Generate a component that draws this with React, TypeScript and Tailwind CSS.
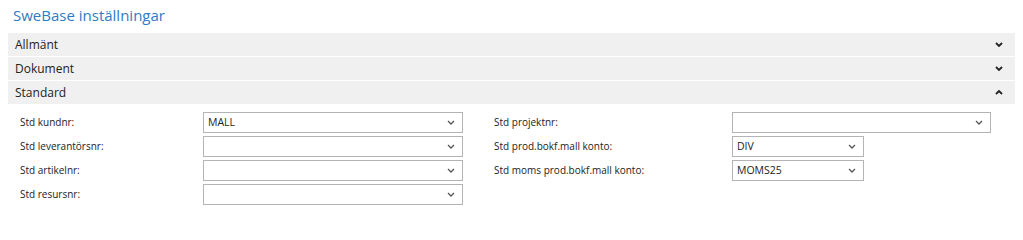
import React from "react"

const font = { fontFamily: '"Segoe UI", "Open Sans", "Noto Sans", sans-serif' }

function Chevron({ up = false, bold = false }: { up?: boolean; bold?: boolean }) {
  return (
    <svg width="8" height="5" viewBox="0 0 8 5" className={bold ? "text-[#222]" : "text-[#555]"}>
      <path
        d={up ? "M1 4 L4 1 L7 4" : "M1 1 L4 4 L7 1"}
        fill="none"
        stroke="currentColor"
        strokeWidth={bold ? 1.8 : 1.3}
      />
    </svg>
  )
}

function SectionBar({ title, open = false }: { title: string; open?: boolean }) {
  return (
    <div className="mx-2 flex h-[23px] items-center justify-between bg-[#f0f0f0] pl-[7px] pr-[12px] text-[12px] text-[#222]">
      <span>{title}</span>
      <Chevron up={open} bold />
    </div>
  )
}

function Select({ value = "", width }: { value?: string; width: string }) {
  return (
    <div className={`flex h-[21px] items-center justify-between border border-[#b4b4b4] bg-white pl-[4px] pr-[7px] text-[10.5px] text-[#222] ${width}`}>
      <span>{value}</span>
      <Chevron />
    </div>
  )
}

function Field({ label, children }: { label: string; children: React.ReactNode }) {
  return (
    <>
      <div className="flex h-[21px] items-center text-[10px] text-[#222]">{label}</div>
      <div>{children}</div>
    </>
  )
}

export default function App() {
  return (
    <div className="h-[223px] w-[1023px] bg-white" style={font}>
      <div className="flex h-[33px] items-start pl-[13px] pt-[3px]">
        <h1 className="text-[15px] leading-[24px] text-[#2f7bc5]">SweBase inställningar</h1>
      </div>

      <div className="flex flex-col gap-px">
        <SectionBar title="Allmänt" />
        <SectionBar title="Dokument" />
        <SectionBar title="Standard" open />
      </div>

      <div className="flex pl-[20px] pt-[8px]">
        <div className="grid w-[474px] grid-cols-[183px_260px] content-start gap-y-[3px]">
          <Field label="Std kundnr:">
            <Select value="MALL" width="w-[260px]" />
          </Field>
          <Field label="Std leverantörsnr:">
            <Select width="w-[260px]" />
          </Field>
          <Field label="Std artikelnr:">
            <Select width="w-[260px]" />
          </Field>
          <Field label="Std resursnr:">
            <Select width="w-[260px]" />
          </Field>
        </div>

        <div className="grid grid-cols-[238px_259px] content-start gap-y-[3px]">
          <Field label="Std projektnr:">
            <Select width="w-[259px]" />
          </Field>
          <Field label="Std prod.bokf.mall konto:">
            <Select value="DIV" width="w-[132px]" />
          </Field>
          <Field label="Std moms prod.bokf.mall konto:">
            <Select value="MOMS25" width="w-[132px]" />
          </Field>
        </div>
      </div>
    </div>
  )
}
